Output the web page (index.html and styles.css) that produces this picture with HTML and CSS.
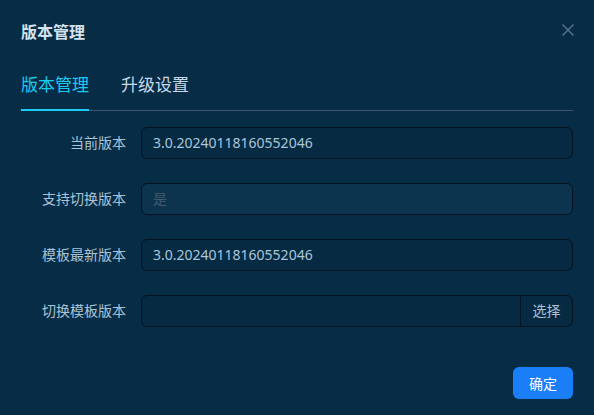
FILE: index.html
```html
<!DOCTYPE html>
<html lang="zh-CN">
<head>
    <meta charset="UTF-8">
    <meta name="viewport" content="width=device-width, initial-scale=1.0">
    <title>版本管理</title>
    <link rel="stylesheet" href="styles.css">
</head>
<body>
    <div class="modal">
        <div class="modal-header">
            <h2>版本管理</h2>
            <span class="close-btn">
                <svg width="12" height="12" viewBox="0 0 12 12">
                    <path d="M0.5 0.5 L11.5 11.5 M11.5 0.5 L0.5 11.5" stroke="#5b7890" stroke-width="1.3" fill="none"/>
                </svg>
            </span>
        </div>

        <div class="tabs">
            <div class="tab active">版本管理</div>
            <div class="tab">升级设置</div>
        </div>

        <div class="form">
            <label class="form-label">当前版本</label>
            <div class="input">3.0.20240118160552046</div>

            <label class="form-label">支持切换版本</label>
            <div class="input disabled">是</div>

            <label class="form-label">模板最新版本</label>
            <div class="input">3.0.20240118160552046</div>

            <label class="form-label">切换模板版本</label>
            <div class="input-group">
                <div class="input-field"></div>
                <div class="input-addon">选择</div>
            </div>
        </div>

        <div class="modal-footer">
            <button class="btn-primary">确定</button>
        </div>
    </div>
</body>
</html>
```

FILE: styles.css
```css
body {
    font-family: 'Noto Sans', 'Noto Sans CJK SC', sans-serif;
    margin: 0;
    padding: 0;
    background-color: #072c45;
    color: #a9c3d8;
}
.modal {
    width: 594px;
    height: 415px;
    box-sizing: border-box;
    padding: 20px 21px;
    display: flex;
    flex-direction: column;
}
.modal-header {
    display: flex;
    justify-content: space-between;
    align-items: center;
    height: 24px;
}
.modal-header h2 {
    margin: 0;
    font-size: 16px;
    font-weight: bold;
    line-height: 24px;
    color: #d3e2ee;
}
.close-btn {
    display: flex;
    margin-right: -1px;
    margin-top: -4px;
}
.tabs {
    display: flex;
    gap: 32px;
    margin-top: 17px;
    border-bottom: 1px solid #3a5670;
}
.tab {
    position: relative;
    font-size: 17px;
    line-height: 24px;
    padding: 12px 0 13px;
    color: #c6d9ea;
}
.tab.active {
    color: #1ccbf3;
}
.tab.active::after {
    content: '';
    position: absolute;
    left: 0;
    right: 0;
    bottom: -1px;
    height: 2px;
    background-color: #1ccbf3;
}
.form {
    display: grid;
    grid-template-columns: 105px 1fr;
    column-gap: 15px;
    row-gap: 24px;
    margin-top: 16px;
}
.form-label {
    text-align: right;
    font-size: 14px;
    line-height: 32px;
    color: #a9c3d8;
}
.input {
    height: 32px;
    box-sizing: border-box;
    border: 1px solid #03121f;
    border-radius: 6px;
    background-color: #062a42;
    padding: 0 11px;
    font-size: 14px;
    line-height: 30px;
    color: #a9c6dd;
}
.input.disabled {
    background-color: #0c344f;
    color: #3f5a70;
}
.input-group {
    display: flex;
    height: 32px;
    box-sizing: border-box;
    border: 1px solid #03121f;
    border-radius: 6px;
    background-color: #062a42;
}
.input-field {
    flex: 1;
}
.input-addon {
    width: 51px;
    border-left: 1px solid #03121f;
    text-align: center;
    font-size: 14px;
    line-height: 30px;
    color: #a9c3d8;
}
.modal-footer {
    display: flex;
    justify-content: flex-end;
    margin-top: 40px;
}
.btn-primary {
    width: 60px;
    height: 32px;
    border: none;
    border-radius: 6px;
    background-color: #1a7ef7;
    color: #fff;
    font-family: inherit;
    font-size: 14px;
    padding: 0;
}
```
